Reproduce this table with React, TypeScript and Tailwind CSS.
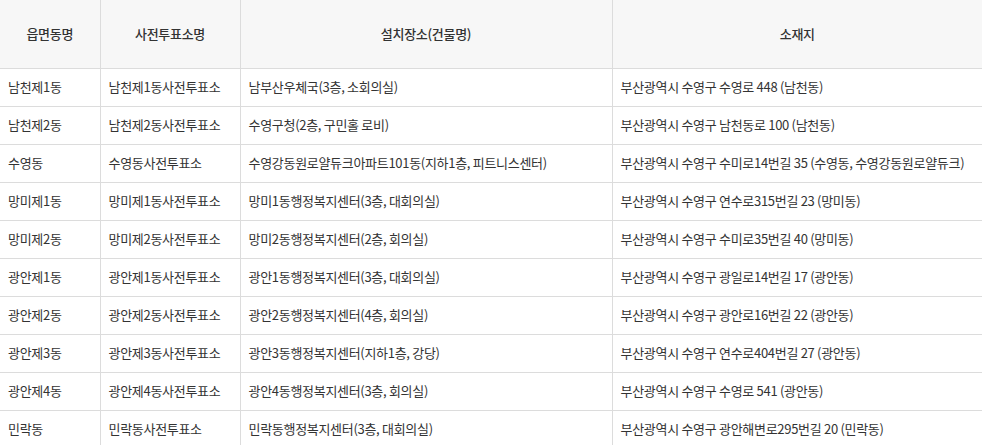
const rows = [
  ["남천제1동", "남천제1동사전투표소", "남부산우체국(3층, 소회의실)", "부산광역시 수영구 수영로 448 (남천동)"],
  ["남천제2동", "남천제2동사전투표소", "수영구청(2층, 구민홀 로비)", "부산광역시 수영구 남천동로 100 (남천동)"],
  ["수영동", "수영동사전투표소", "수영강동원로얄듀크아파트101동(지하1층, 피트니스센터)", "부산광역시 수영구 수미로14번길 35 (수영동, 수영강동원로얄듀크)"],
  ["망미제1동", "망미제1동사전투표소", "망미1동행정복지센터(3층, 대회의실)", "부산광역시 수영구 연수로315번길 23 (망미동)"],
  ["망미제2동", "망미제2동사전투표소", "망미2동행정복지센터(2층, 회의실)", "부산광역시 수영구 수미로35번길 40 (망미동)"],
  ["광안제1동", "광안제1동사전투표소", "광안1동행정복지센터(3층, 대회의실)", "부산광역시 수영구 광일로14번길 17 (광안동)"],
  ["광안제2동", "광안제2동사전투표소", "광안2동행정복지센터(4층, 회의실)", "부산광역시 수영구 광안로16번길 22 (광안동)"],
  ["광안제3동", "광안제3동사전투표소", "광안3동행정복지센터(지하1층, 강당)", "부산광역시 수영구 연수로404번길 27 (광안동)"],
  ["광안제4동", "광안제4동사전투표소", "광안4동행정복지센터(3층, 회의실)", "부산광역시 수영구 수영로 541 (광안동)"],
  ["민락동", "민락동사전투표소", "민락동행정복지센터(3층, 대회의실)", "부산광역시 수영구 광안해변로295번길 20 (민락동)"],
];

const headers = ["읍면동명", "사전투표소명", "설치장소(건물명)", "소재지"];

export default function App() {
  return (
    <div className="w-[982px] h-[445px] overflow-hidden bg-white font-['Noto_Sans_CJK_KR','Noto_Sans',sans-serif] text-[13px] text-[#333] tracking-[-0.3px]">
      <table className="w-[982px] table-fixed border-collapse">
        <colgroup>
          <col className="w-[100px]" />
          <col className="w-[140px]" />
          <col className="w-[372px]" />
          <col />
        </colgroup>
        <thead>
          <tr className="h-[68px] bg-[#f7f7f7]">
            {headers.map((h, i) => (
              <th
                key={h}
                className={`font-medium text-center align-middle border-b border-[#dcdcdc] ${i > 0 ? "border-l" : ""}`}
              >
                {h}
              </th>
            ))}
          </tr>
        </thead>
        <tbody>
          {rows.map((r) => (
            <tr key={r[0]} className="h-[38px]">
              {r.map((c, i) => (
                <td
                  key={i}
                  className={`px-2 whitespace-nowrap align-middle border-b border-[#dcdcdc] ${i > 0 ? "border-l" : ""}`}
                >
                  {c}
                </td>
              ))}
            </tr>
          ))}
        </tbody>
      </table>
    </div>
  );
}
